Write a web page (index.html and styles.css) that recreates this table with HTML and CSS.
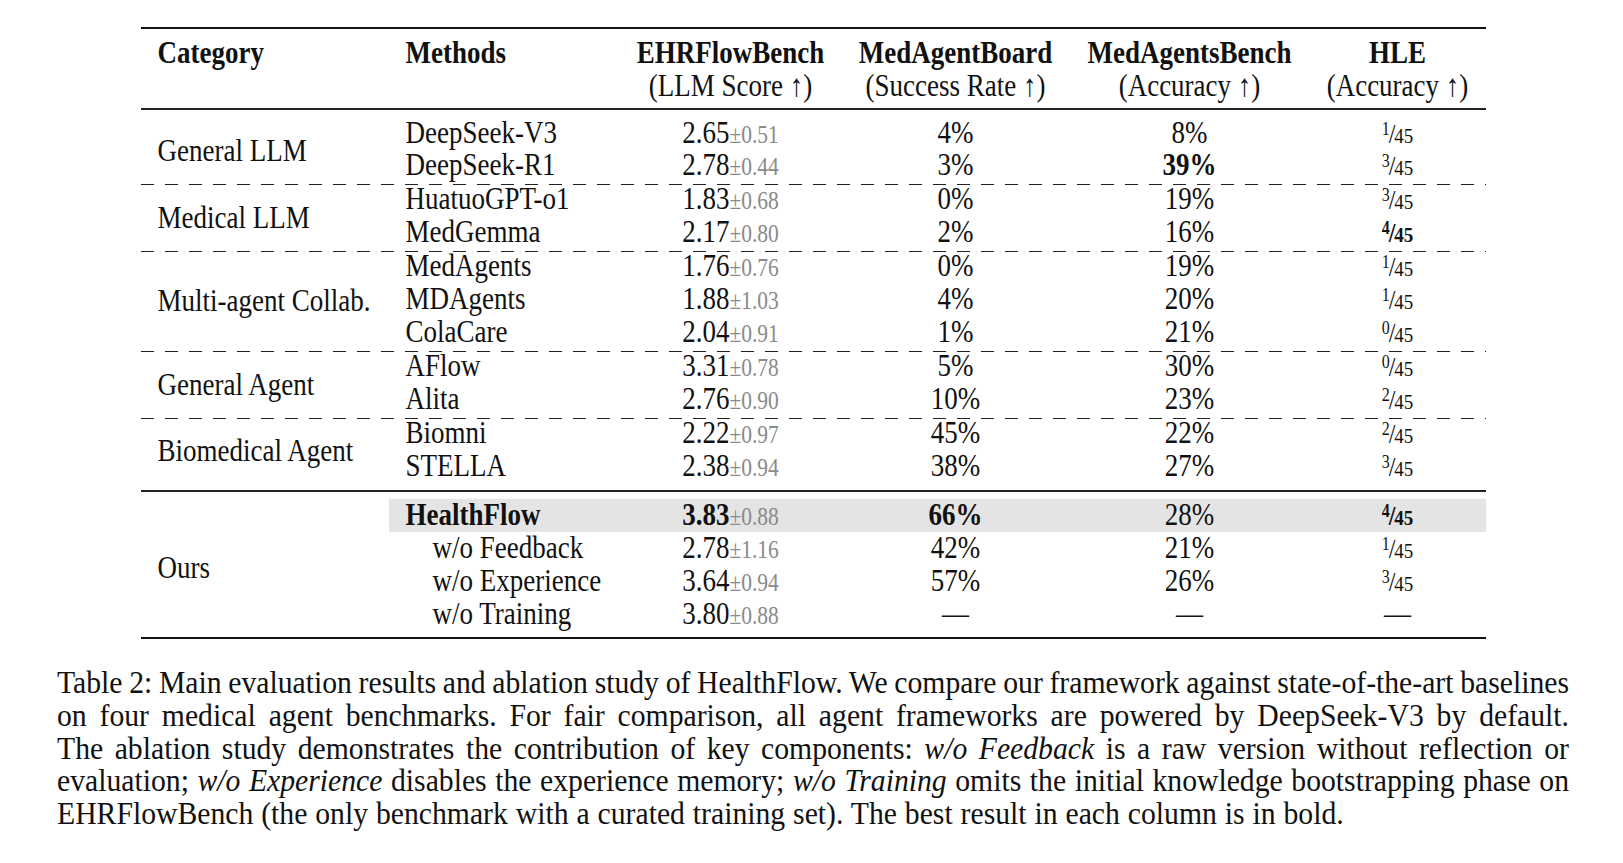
FILE: index.html
```html
<!DOCTYPE html>
<html lang="en">
<head>
<meta charset="utf-8">
<title>Table 2: HealthFlow results</title>
<link rel="stylesheet" href="styles.css">
</head>
<body>
<div class="page">
  <table class="results">
    <colgroup>
      <col class="c-cat"><col class="c-meth"><col class="c-ehr"><col class="c-mab"><col class="c-mabench"><col class="c-hle">
    </colgroup>
    <thead>
      <tr>
        <th class="l">Category</th>
        <th class="l">Methods</th>
        <th><b>EHRFlowBench</b><span class="sub">(LLM Score ↑)</span></th>
        <th><b>MedAgentBoard</b><span class="sub">(Success Rate ↑)</span></th>
        <th><b>MedAgentsBench</b><span class="sub">(Accuracy ↑)</span></th>
        <th><b>HLE</b><span class="sub">(Accuracy ↑)</span></th>
      </tr>
    </thead>
    <tbody>
      <tr class="first">
        <td class="cat" rowspan="2">General LLM</td>
        <td class="m">DeepSeek-V3</td>
        <td>2.65<span class="sd">±0.51</span></td><td>4%</td><td>8%</td>
        <td><span class="frac"><span class="nu">1</span><span class="sl">/</span><span class="de">45</span></span></td>
      </tr>
      <tr class="pre">
        <td class="m">DeepSeek-R1</td>
        <td>2.78<span class="sd">±0.44</span></td><td>3%</td><td><b>39%</b></td>
        <td><span class="frac"><span class="nu">3</span><span class="sl">/</span><span class="de">45</span></span></td>
      </tr>
      <tr class="dash"><td colspan="6"></td></tr>
      <tr class="post">
        <td class="cat" rowspan="2">Medical LLM</td>
        <td class="m">HuatuoGPT-o1</td>
        <td>1.83<span class="sd">±0.68</span></td><td>0%</td><td>19%</td>
        <td><span class="frac"><span class="nu">3</span><span class="sl">/</span><span class="de">45</span></span></td>
      </tr>
      <tr class="pre">
        <td class="m">MedGemma</td>
        <td>2.17<span class="sd">±0.80</span></td><td>2%</td><td>16%</td>
        <td><span class="frac bold"><span class="nu">4</span><span class="sl">/</span><span class="de">45</span></span></td>
      </tr>
      <tr class="dash"><td colspan="6"></td></tr>
      <tr class="post">
        <td class="cat" rowspan="3">Multi-agent Collab.</td>
        <td class="m">MedAgents</td>
        <td>1.76<span class="sd">±0.76</span></td><td>0%</td><td>19%</td>
        <td><span class="frac"><span class="nu">1</span><span class="sl">/</span><span class="de">45</span></span></td>
      </tr>
      <tr>
        <td class="m">MDAgents</td>
        <td>1.88<span class="sd">±1.03</span></td><td>4%</td><td>20%</td>
        <td><span class="frac"><span class="nu">1</span><span class="sl">/</span><span class="de">45</span></span></td>
      </tr>
      <tr class="pre">
        <td class="m">ColaCare</td>
        <td>2.04<span class="sd">±0.91</span></td><td>1%</td><td>21%</td>
        <td><span class="frac"><span class="nu">0</span><span class="sl">/</span><span class="de">45</span></span></td>
      </tr>
      <tr class="dash"><td colspan="6"></td></tr>
      <tr class="post">
        <td class="cat" rowspan="2">General Agent</td>
        <td class="m">AFlow</td>
        <td>3.31<span class="sd">±0.78</span></td><td>5%</td><td>30%</td>
        <td><span class="frac"><span class="nu">0</span><span class="sl">/</span><span class="de">45</span></span></td>
      </tr>
      <tr class="pre">
        <td class="m">Alita</td>
        <td>2.76<span class="sd">±0.90</span></td><td>10%</td><td>23%</td>
        <td><span class="frac"><span class="nu">2</span><span class="sl">/</span><span class="de">45</span></span></td>
      </tr>
      <tr class="dash"><td colspan="6"></td></tr>
      <tr class="post">
        <td class="cat" rowspan="2">Biomedical Agent</td>
        <td class="m">Biomni</td>
        <td>2.22<span class="sd">±0.97</span></td><td>45%</td><td>22%</td>
        <td><span class="frac"><span class="nu">2</span><span class="sl">/</span><span class="de">45</span></span></td>
      </tr>
      <tr>
        <td class="m">STELLA</td>
        <td>2.38<span class="sd">±0.94</span></td><td>38%</td><td>27%</td>
        <td><span class="frac"><span class="nu">3</span><span class="sl">/</span><span class="de">45</span></span></td>
      </tr>
      <tr class="rule"><td colspan="6"></td></tr>
      <tr class="hl">
        <td class="cat" rowspan="4">Ours</td>
        <td class="m"><b>HealthFlow</b></td>
        <td><b>3.83</b><span class="sd">±0.88</span></td><td><b>66%</b></td><td>28%</td>
        <td><span class="frac bold"><span class="nu">4</span><span class="sl">/</span><span class="de">45</span></span></td>
      </tr>
      <tr>
        <td class="m ind">w/o Feedback</td>
        <td>2.78<span class="sd">±1.16</span></td><td>42%</td><td>21%</td>
        <td><span class="frac"><span class="nu">1</span><span class="sl">/</span><span class="de">45</span></span></td>
      </tr>
      <tr>
        <td class="m ind">w/o Experience</td>
        <td>3.64<span class="sd">±0.94</span></td><td>57%</td><td>26%</td>
        <td><span class="frac"><span class="nu">3</span><span class="sl">/</span><span class="de">45</span></span></td>
      </tr>
      <tr class="last">
        <td class="m ind">w/o Training</td>
        <td>3.80<span class="sd">±0.88</span></td><td>—</td><td>—</td><td>—</td>
      </tr>
    </tbody>
  </table>

  <p class="caption">
    <span class="ln">Table 2: Main evaluation results and ablation study of HealthFlow. We compare our framework against state-of-the-art baselines</span>
    <span class="ln">on four medical agent benchmarks. For fair comparison, all agent frameworks are powered by DeepSeek-V3 by default.</span>
    <span class="ln">The ablation study demonstrates the contribution of key components: <i>w/o Feedback</i> is a raw version without reflection or</span>
    <span class="ln">evaluation; <i>w/o Experience</i> disables the experience memory; <i>w/o Training</i> omits the initial knowledge bootstrapping phase on</span>
    <span class="ln end">EHRFlowBench (the only benchmark with a curated training set). The best result in each column is in bold.</span>
  </p>
</div>
</body>
</html>
```
FILE: styles.css
```css
html, body {
  margin: 0;
  padding: 0;
  background: #ffffff;
}

body {
  min-height: 863px;
  font-family: "Liberation Serif", "Times New Roman", serif;
  color: #111;
  font-size: 27px;
}

.page {
  width: 1512px;
  margin-left: 57px;
  padding-top: 27px;
}

.results {
  width: 1345px;
  margin: 0 auto;
  border-collapse: collapse;
  table-layout: fixed;
  border-top: 2px solid #111;
  border-bottom: 2px solid #111;
}

.c-cat { width: 248px; }
.c-meth { width: 231px; }
.c-ehr { width: 222px; }
.c-mab { width: 228px; }
.c-mabench { width: 240px; }
.c-hle { width: 176px; }

/* glyphs in the source are taller than Times proportions */
.results th,
.results tr:not(.dash):not(.rule) td {
  transform: scaleY(1.15);
}

.results th {
  font-weight: normal;
  text-align: center;
  vertical-align: top;
  line-height: 27.8px;
  padding: 13px 17px 10px;
  white-space: nowrap;
}

.results th.l {
  text-align: left;
  font-weight: bold;
}

.results th b,
.results th .sub {
  display: block;
}

.results thead tr {
  border-bottom: 2px solid #222;
}

.results td {
  height: 33px;
  line-height: 33px;
  padding: 0 17px;
  text-align: center;
  white-space: nowrap;
  box-sizing: border-box;
}

.results tr.first td {
  padding-top: 6px;
  height: 39px;
}

.results tr.pre td:not(.cat) {
  padding-bottom: 2px;
  height: 35px;
}

.results tr.post td:not(.cat) {
  height: 31px;
  line-height: 29px;
  padding-bottom: 2px;
}

.results td.cat,
.results td.m {
  text-align: left;
}

.results td.cat {
  vertical-align: middle;
  padding-top: 0;
}

.results td.ind {
  padding-left: 44px;
}

.sd {
  font-size: 21.5px;
  line-height: 1;
  color: #8a8a8a;
}

.frac {
  display: inline-block;
  line-height: 1;
  white-space: nowrap;
}

.frac .nu {
  font-size: 16px;
  vertical-align: 7px;
}

.frac .sl {
  font-size: 24px;
  margin: 0 -1px;
}

.frac .de {
  font-size: 19px;
}

.frac.bold {
  font-weight: bold;
}

.results tr.dash td {
  height: 1px;
  padding: 0;
  line-height: 0;
  font-size: 0;
  background: repeating-linear-gradient(90deg, #222 0 13px, transparent 13px 24px);
}

.results tr.rule td {
  height: 16px;
  padding: 0;
  line-height: 0;
  font-size: 0;
  background: linear-gradient(#222, #222) no-repeat center / 100% 2px;
}

.results tr.hl td:not(.cat) {
  background: linear-gradient(#e4e4e4, #e4e4e4) no-repeat center / 100% 87%;
}

.results tr.last td:not(.cat) {
  padding-bottom: 6px;
  height: 39px;
}

.caption {
  margin: 28px 0 0;
  line-height: 30.75px;
  font-size: 29.7px;
  transform: scaleY(1.06);
  transform-origin: top left;
}

.caption .ln {
  display: block;
  white-space: nowrap;
  word-spacing: -2px;
  text-align: justify;
  text-align-last: justify;
}

.caption .ln.end {
  word-spacing: 0.5px;
  text-align: left;
  text-align-last: left;
}
```
